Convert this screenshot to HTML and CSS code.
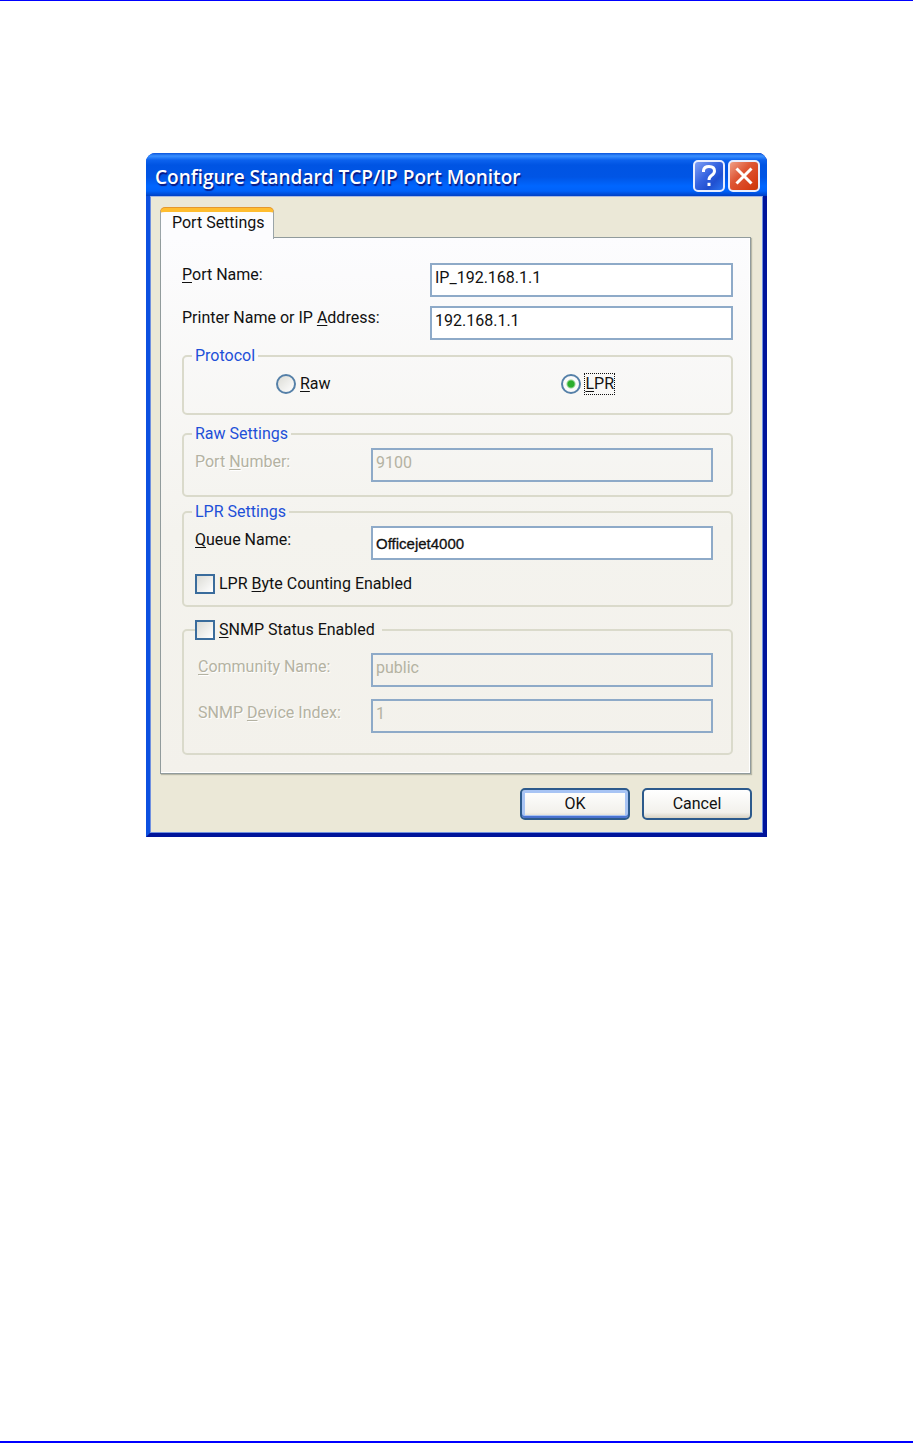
FILE: index.html
```html
<!DOCTYPE html>
<html lang="en">
<head>
  <meta charset="UTF-8" />
  <title>Configure Standard TCP/IP Port Monitor</title>
  <meta name="viewport" content="width=device-width, initial-scale=1" />
  <link rel="stylesheet" href="styles.css">
</head>
<body>
  <main class="window">
    <header class="titlebar">
      <h1 class="title">Configure Standard TCP/IP Port Monitor</h1>
      <button type="button" class="caption-btn help" aria-label="Help">
        <svg viewBox="0 0 32 32" width="32" height="32">
          <path d="M10.5 12 V10.5 Q11 6.5 16 6.5 Q21.5 6.5 21.5 11 Q21.5 13.5 18.5 15.5 Q16 17.2 16 20" />
          <path d="M16 22.8 V26" />
        </svg>
      </button>
      <button type="button" class="caption-btn close" aria-label="Close">
        <svg viewBox="0 0 32 32" width="32" height="32">
          <path d="M8.5 8.5 L23.5 23.5 M23.5 8.5 L8.5 23.5" />
        </svg>
      </button>
    </header>

    <form class="client">
      <div class="tabs" role="tablist">
        <button type="button" class="tab" role="tab" aria-selected="true">Port Settings</button>
      </div>

      <div class="panel" role="tabpanel">
        <div class="row wide">
          <label for="portName"><u>P</u>ort Name:</label>
          <input type="text" id="portName" value="IP_192.168.1.1">
        </div>
        <div class="row wide">
          <label for="address">Printer Name or IP <u>A</u>ddress:</label>
          <input type="text" id="address" value="192.168.1.1">
        </div>

        <fieldset class="group protocol">
          <legend>Protocol</legend>
          <div class="radios">
            <label class="check"><input type="radio" name="protocol"><span><u>R</u>aw</span></label>
            <label class="check"><input type="radio" name="protocol" checked><span class="focused"><u>L</u>PR</span></label>
          </div>
        </fieldset>

        <fieldset class="group raw">
          <legend>Raw Settings</legend>
          <div class="row">
            <label for="portNumber" class="off">Port <u>N</u>umber:</label>
            <input type="text" id="portNumber" value="9100" disabled>
          </div>
        </fieldset>

        <fieldset class="group lpr">
          <legend>LPR Settings</legend>
          <div class="row">
            <label for="queueName"><u>Q</u>ueue Name:</label>
            <input type="text" id="queueName" class="queue" value="Officejet4000">
          </div>
          <label class="check"><input type="checkbox"><span>LPR <u>B</u>yte Counting Enabled</span></label>
        </fieldset>

        <fieldset class="group snmp">
          <legend><label class="check"><input type="checkbox"><span><u>S</u>NMP Status Enabled</span></label></legend>
          <div class="row">
            <label for="community" class="off"><u>C</u>ommunity Name:</label>
            <input type="text" id="community" value="public" disabled>
          </div>
          <div class="row">
            <label for="deviceIndex" class="off">SNMP <u>D</u>evice Index:</label>
            <input type="text" id="deviceIndex" value="1" disabled>
          </div>
        </fieldset>
      </div>

      <div class="buttons">
        <button type="button" class="btn default">OK</button>
        <button type="button" class="btn">Cancel</button>
      </div>
    </form>
  </main>
</body>
</html>
```
FILE: styles.css
```css
* { box-sizing: border-box; }
body {
  margin: 0;
  min-height: 100vh;
  padding: 152px 16px 16px;
  background: white;
  border-top: 1px solid #0000ff;
  border-bottom: 2px solid #0000ff;
  font-family: Roboto, "Liberation Sans", sans-serif;
  font-size: 16px;
  line-height: 20px;
  color: #111;
}
input, button {
  font: inherit;
  color: inherit;
}
.window {
  max-width: 621px;
  margin: 0 auto;
  border-style: solid;
  border-width: 0 4px 4px;
  border-color: #0019a8 #00149a #00149a #0c50e0;
  border-radius: 9px 9px 0 0;
  background: #0a50e0;
}

/* title bar */
.titlebar {
  display: flex;
  align-items: center;
  gap: 3px;
  height: 43px;
  margin: 0 -4px;
  padding: 3px 7px 0 9px;
  border-radius: 9px 9px 0 0;
  background: linear-gradient(#0a54dc 0, #3a90ff 3px, #0c62ee 7px, #0054e3 12px, #0055e5 24px, #0066ff 33px, #0062fa 38px, #0040c4 43px);
}
.title {
  flex: 1;
  margin: 0;
  padding-top: 2px;
  font-family: "Open Sans", sans-serif;
  font-size: 19px;
  font-weight: 600;
  line-height: 24px;
  color: white;
  text-shadow: 1px 2px 1px #0a1883;
}
.caption-btn {
  width: 32px;
  height: 32px;
  padding: 0;
  border: 2px solid #e8eeff;
  border-radius: 5px;
}
.caption-btn svg {
  display: block;
  margin: -2px;
  fill: none;
  stroke: white;
  stroke-width: 3;
}
.help { background: linear-gradient(135deg, #7f9ff5, #3563e0 45%, #2050d0 70%, #2a74f0); }
.close { background: linear-gradient(135deg, #f0a088, #de5736 40%, #d8401a 75%, #c83808); }

/* client area */
.client {
  padding: 11px 11px 12px 9px;
  border: 1px solid #7090e0;
  border-top-color: #a8b8e0;
  background: #ebe8d7;
}
.tab {
  position: relative;
  display: block;
  height: 31px;
  margin-bottom: -2px;
  padding: 0 8px 5px 11px;
  border: 1px solid #9aa4a8;
  border-top: 4px solid #ffbd30;
  border-bottom: 0;
  border-radius: 5px 5px 0 0;
  background: #fcfcfe;
  box-shadow: 0 -1px 0 #e5972d;
}
.panel {
  padding: 25px 17px 18px 21px;
  border: 1px solid #919b9c;
  background: linear-gradient(#fcfcfe, #f4f3ee 55%, #f3f1eb);
  box-shadow: 1px 1px 1px #b8b8a8, inset -1px -1px 0 white;
}
.row {
  display: flex;
  align-items: flex-start;
}
.row label { width: 176px; padding-top: 4px; }
.row.wide { margin-bottom: 9px; }
.row.wide label { width: 248px; padding-top: 2px; }
.row input {
  flex: 1;
  min-width: 0;
  height: 34px;
  padding: 0 3px 6px;
  border: 2px solid #8eaac8;
  background: white;
}
.row input.queue {
  padding: 0 3px;
  font-family: "Liberation Sans", sans-serif;
  font-size: 15px;
  -webkit-text-stroke: 0.3px #111;
}
.row input:disabled {
  background: transparent;
  color: #b4b2a2;
}
.off {
  color: #b4b2a2;
  text-shadow: 1px 1px 0 white;
}
u { text-underline-offset: 2px; }

/* group boxes */
.group {
  min-width: 0;
  margin: 0;
  padding: 0 18px 0 11px;
  border: 2px solid #dadacb;
  border-radius: 5px;
}
.group legend {
  margin-left: -3px;
  padding: 0 3px;
  color: #1e50d8;
}
.protocol { margin-top: -3px; padding-top: 8px; padding-bottom: 19px; }
.raw { margin-top: 9px; padding-top: 4px; padding-bottom: 13px; }
.lpr { margin-top: 5px; padding-top: 4px; padding-bottom: 11px; }
.lpr .row { margin-bottom: 14px; }
.snmp { margin-top: 13px; padding-top: 13px; padding-bottom: 20px; }
.snmp legend { margin-left: 0; padding: 0 7px 0 0; }
.snmp .row label { padding-left: 3px; }
.snmp .row + .row { margin-top: 12px; }
.radios {
  display: flex;
  justify-content: space-between;
  padding: 0 99px 0 81px;
}
.check {
  display: flex;
  align-items: center;
  gap: 4px;
  color: #111;
}
.check input {
  appearance: none;
  width: 20px;
  height: 20px;
  margin: 0;
  border: 2px solid #3a6c9c;
  background: linear-gradient(135deg, #dcdcd6, #fff);
}
.check input[type=radio] { border-radius: 50%; border-color: #5580a8; }
.check input[type=radio]:checked {
  background: radial-gradient(circle, #2cae2c 3px, #fafafa 5px);
}
.focused { outline: 1px dotted #111; }

/* bottom buttons */
.buttons {
  display: flex;
  justify-content: flex-end;
  gap: 12px;
  margin: 14px -1px 0 0;
}
.btn {
  width: 110px;
  height: 32px;
  padding: 0;
  border: 2px solid #2c5a8c;
  border-radius: 5px;
  background: linear-gradient(#fff, #f2f1ec 80%, #d8d2c4);
}
.btn.default {
  box-shadow: inset 0 -2px 0 #4a72d0, inset 0 0 0 3px #a8c4f4;
}
```
